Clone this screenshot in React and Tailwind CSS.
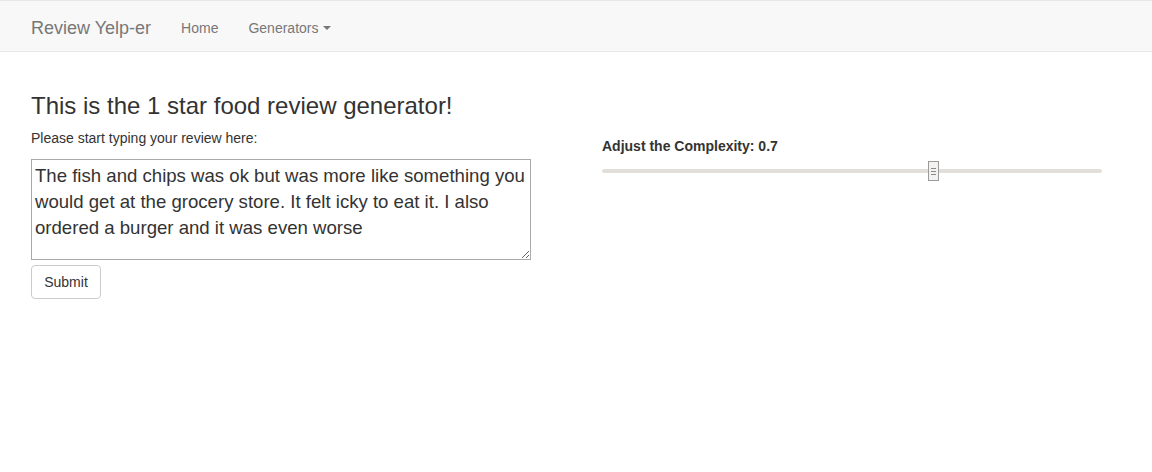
import React, { useState } from 'react';

const FONT = { fontFamily: '"Liberation Sans", Arial, sans-serif' };

function Navbar() {
    return (
        <nav className="h-[52px] bg-[#f8f8f8] border-y border-[#e7e7e7] flex items-center pt-[3px]">
            <a className="ml-[31px] text-[18px] text-[#777] leading-5">Review Yelp-er</a>
            <a className="ml-[30px] text-[14px] text-[#777] leading-5">Home</a>
            <a className="ml-[30px] text-[14px] text-[#777] leading-5 flex items-center">
                Generators
                <span className="ml-[5px] w-0 h-0 border-x-4 border-x-transparent border-t-4 border-t-[#777]" />
            </a>
        </nav>
    );
}

function Slider({ value }) {
    return (
        <div className="relative w-[500px] h-[20px] flex items-center">
            <div className="w-full h-[4px] bg-[#e2dfdb] rounded-sm" />
            <div
                className="absolute top-0 w-[11px] h-[20px] bg-[#f4f2f0] border border-[#9a9a9a] flex flex-col items-center justify-center gap-[2px]"
                style={{ left: `${value * 460 + 4}px` }}
            >
                <span className="w-[5px] h-px bg-[#8a8a8a]" />
                <span className="w-[5px] h-px bg-[#8a8a8a]" />
                <span className="w-[5px] h-px bg-[#8a8a8a]" />
            </div>
        </div>
    );
}

export default function App() {
    const [text, setText] = useState(
        'The fish and chips was ok but was more like something you would get at the grocery store. It felt icky to eat it. I also ordered a burger and it was even worse'
    );

    return (
        <div className="w-[1152px] h-[472px] bg-white text-[#333]" style={FONT}>
            <Navbar />
            <div className="flex pl-[31px]">
                <div className="w-[500px]">
                    <h3 className="mt-[41px] text-[24px] leading-[26px] text-[#333]">This is the 1 star food review generator!</h3>
                    <p className="mt-[9px] text-[14px] leading-[20px]">Please start typing your review here:</p>
                    <textarea
                        className="mt-[11px] block w-[500px] h-[101px] border border-[#a9a9a9] px-[3px] pt-[3px] text-[18.6px] leading-[26px] text-[#333] outline-none"
                        style={FONT}
                        value={text}
                        onChange={(e) => setText(e.target.value)}
                    />
                    <button className="mt-[5px] h-[34px] w-[70px] border border-[#ccc] rounded-[4px] bg-white text-[14px] text-[#333]">
                        Submit
                    </button>
                </div>
                <div className="ml-[71px] mt-[86px]">
                    <label className="block text-[14px] font-bold leading-[16px] text-[#333]">Adjust the Complexity: 0.7</label>
                    <div className="mt-[7px]">
                        <Slider value={0.7} />
                    </div>
                </div>
            </div>
        </div>
    );
}
